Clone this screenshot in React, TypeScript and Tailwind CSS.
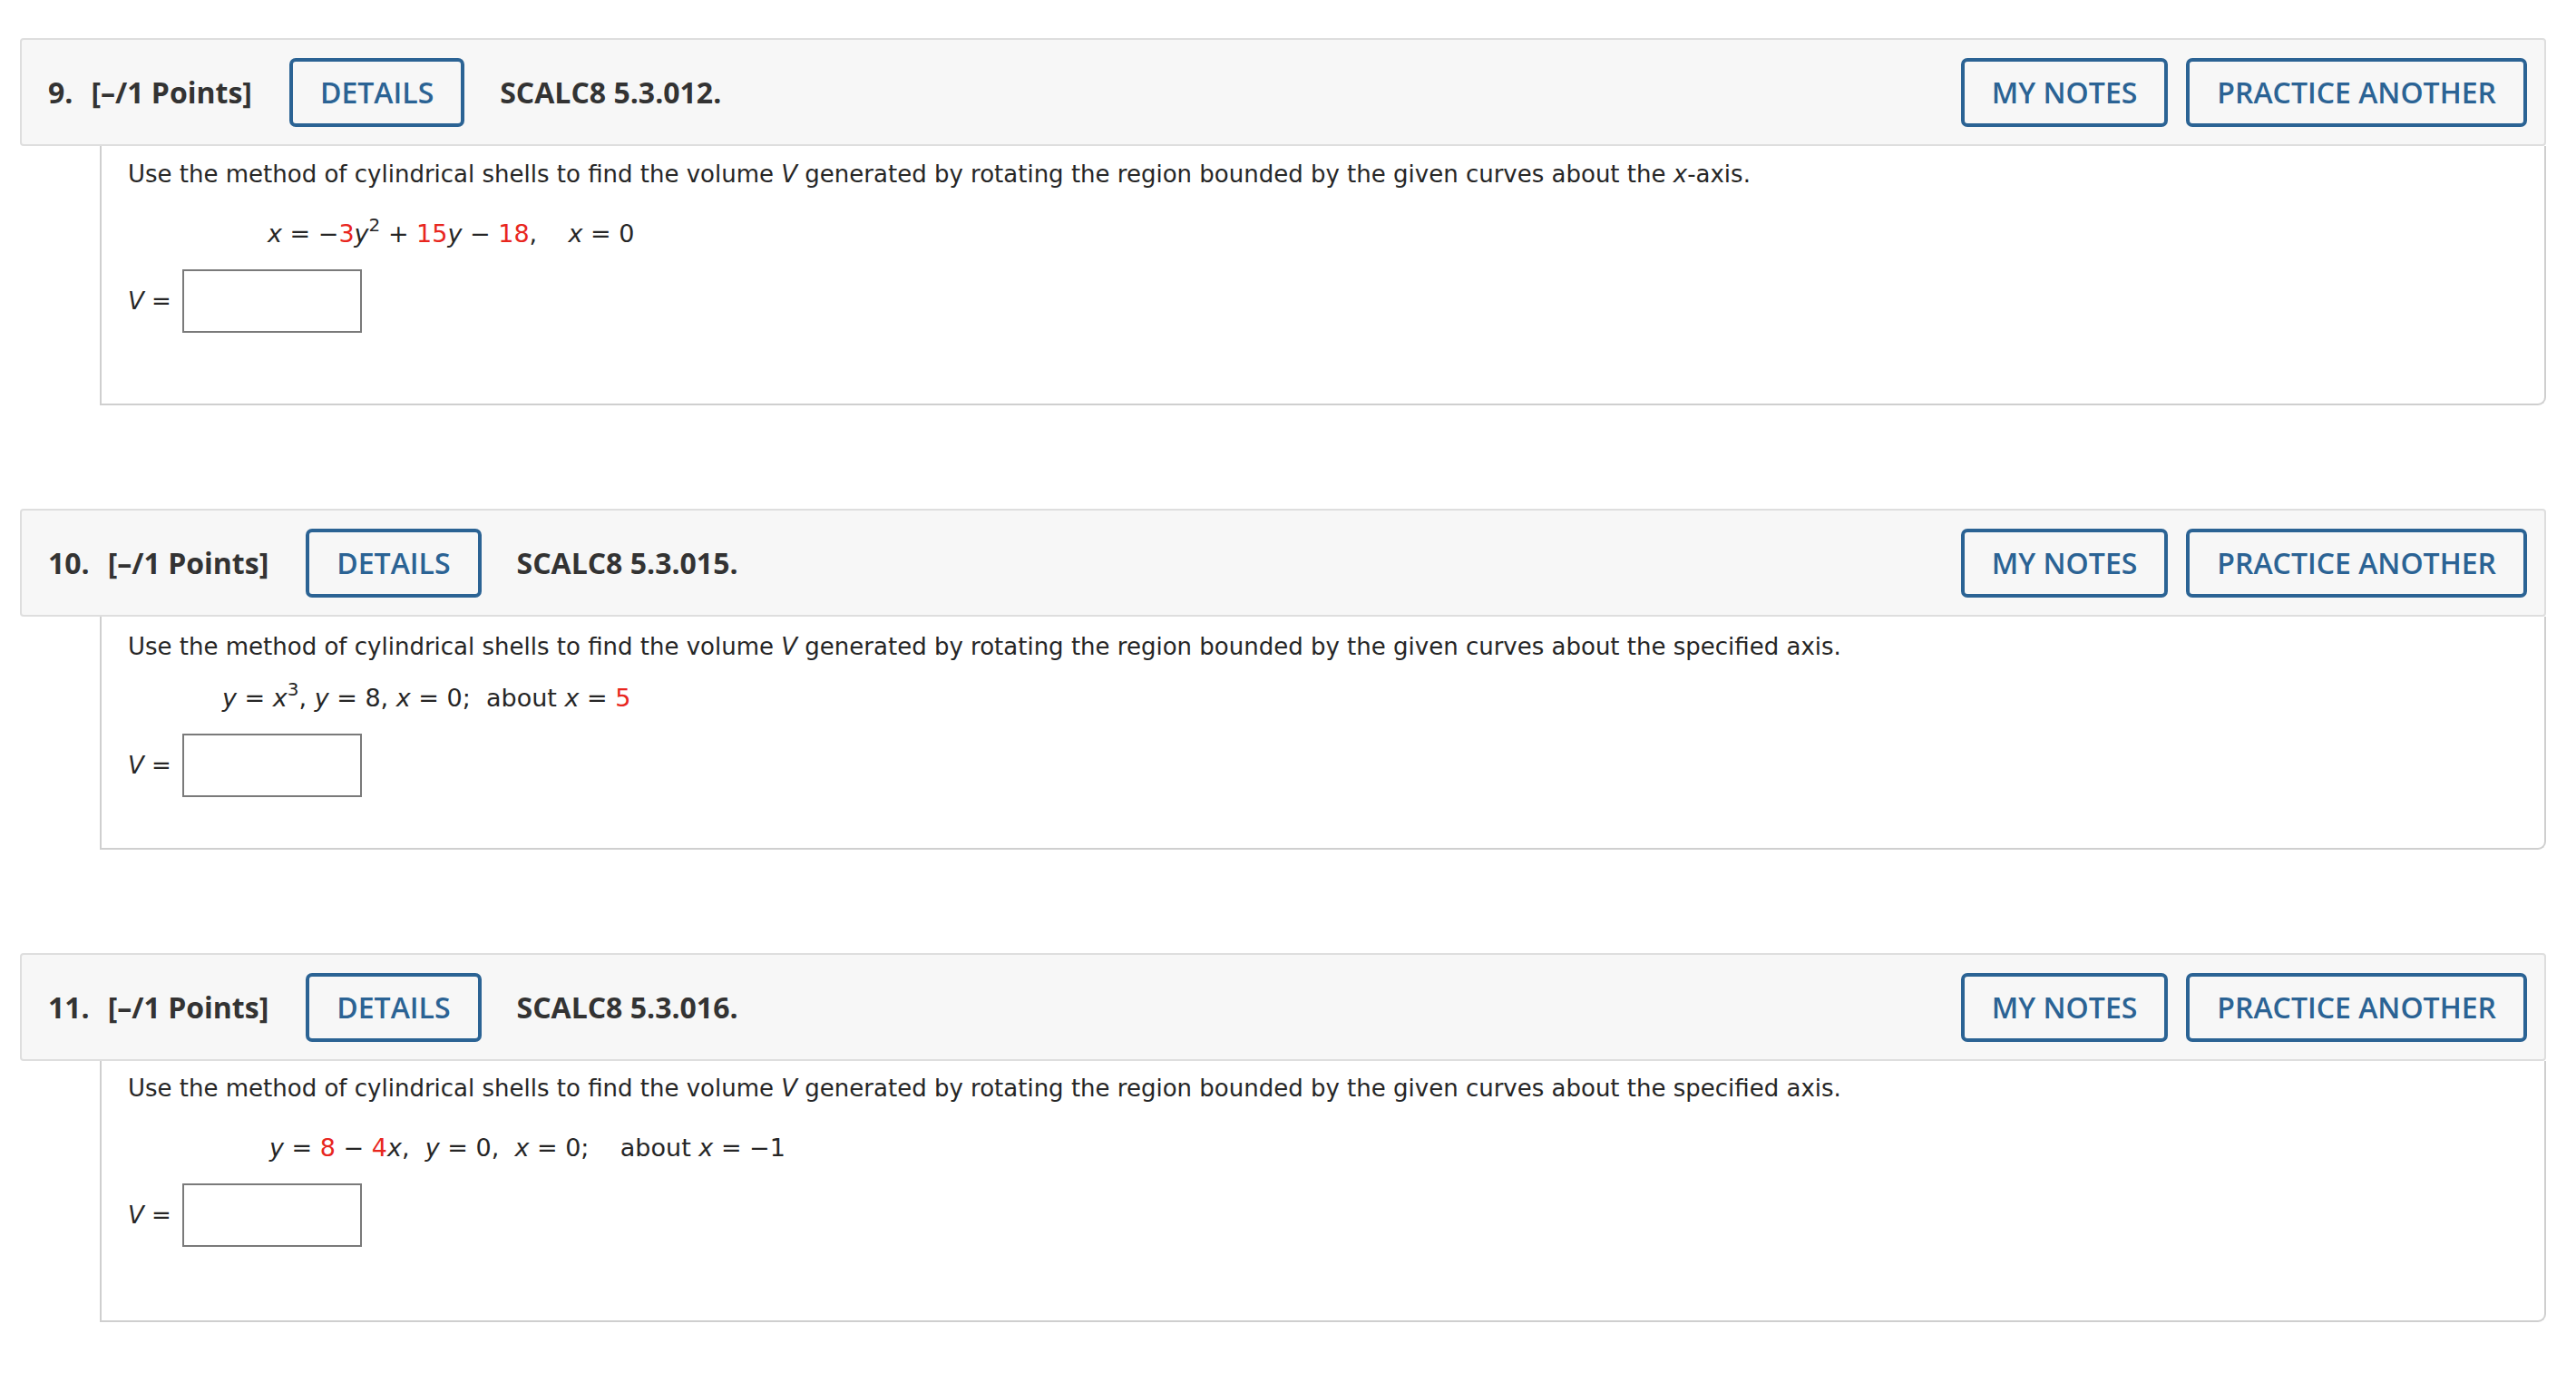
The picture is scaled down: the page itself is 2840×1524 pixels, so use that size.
import type { ReactNode } from 'react';

const R = ({ children }: { children: ReactNode }) => <span className="text-[#e8261e]">{children}</span>;
const I = ({ children }: { children: ReactNode }) => <i>{children}</i>;
const Sup = ({ children }: { children: ReactNode }) => (
  <span className="relative -top-[12px] text-[20px] leading-none">{children}</span>
);

type Q = {
  num: string;
  code: string;
  prompt: ReactNode;
  equation: ReactNode;
  indent: string;
  pad: { top: string; eq: string; bottom: string };
};

const questions: Q[] = [
  {
    num: '9.',
    code: 'SCALC8 5.3.012.',
    prompt: (
      <>
        Use the method of cylindrical shells to find the volume <I>V</I> generated by rotating the region bounded by the given curves about the <I>x</I>-axis.
      </>
    ),
    equation: (
      <>
        <I>x</I> = −<R>3</R><I>y</I><Sup>2</Sup> + <R>15</R><I>y</I> − <R>18</R>,{'    '}<I>x</I> = 0
      </>
    ),
    indent: 'pl-[154px]',
    pad: { top: 'pt-[12px]', eq: 'mt-[26px]', bottom: 'pb-[78px]' },
  },
  {
    num: '10.',
    code: 'SCALC8 5.3.015.',
    prompt: (
      <>
        Use the method of cylindrical shells to find the volume <I>V</I> generated by rotating the region bounded by the given curves about the specified axis.
      </>
    ),
    equation: (
      <>
        <I>y</I> = <I>x</I><Sup>3</Sup>, <I>y</I> = 8, <I>x</I> = 0;{'  '}about <I>x</I> = <R>5</R>
      </>
    ),
    indent: 'pl-[104px]',
    pad: { top: 'pt-[14px]', eq: 'mt-[17px]', bottom: 'pb-[56px]' },
  },
  {
    num: '11.',
    code: 'SCALC8 5.3.016.',
    prompt: (
      <>
        Use the method of cylindrical shells to find the volume <I>V</I> generated by rotating the region bounded by the given curves about the specified axis.
      </>
    ),
    equation: (
      <>
        <I>y</I> = <R>8</R> − <R>4</R><I>x</I>,{'  '}<I>y</I> = 0,{'  '}<I>x</I> = 0;{'    '}about <I>x</I> = −1
      </>
    ),
    indent: 'pl-[156px]',
    pad: { top: 'pt-[11px]', eq: 'mt-[26px]', bottom: 'pb-[81px]' },
  },
];

function OutlineButton({ label }: { label: string }) {
  return (
    <button className="h-[76px] px-[30px] border-4 border-[#2b6394] rounded-[7px] text-[#2b6394] text-[32px] font-semibold leading-none bg-transparent">
      {label}
    </button>
  );
}

function Question({ q }: { q: Q }) {
  return (
    <div>
      <div className="flex items-center h-[119px] pl-[29px] pr-[19px] bg-[#f7f7f7] border-2 border-[#dedede] rounded-[4px] font-['Open_Sans',sans-serif] text-[#333]">
        <span className="text-[32px] font-bold">{q.num}</span>
        <span className="ml-[20px] text-[32px] font-bold">[–/1 Points]</span>
        <div className="ml-[41px]">
          <OutlineButton label="DETAILS" />
        </div>
        <span className="ml-[39px] text-[32px] font-bold">{q.code}</span>
        <div className="ml-auto flex gap-[20px]">
          <OutlineButton label="MY NOTES" />
          <OutlineButton label="PRACTICE ANOTHER" />
        </div>
      </div>
      <div
        className={`ml-[88px] border-2 border-t-0 border-[#cfcfcf] rounded-br-[9px] pl-[29px] ${q.pad.top} ${q.pad.bottom} font-['DejaVu_Sans',Verdana,sans-serif] text-[26px] leading-[39px] text-[#262626]`}
      >
        <p>{q.prompt}</p>
        <div className={`${q.pad.eq} ${q.indent} whitespace-pre text-[27px]`}>{q.equation}</div>
        <div className="mt-[20px] flex items-center gap-[12px]">
          <span>
            <I>V</I> =
          </span>
          <input type="text" className="w-[198px] h-[70px] border-2 border-[#7a7a7a] bg-white outline-none" />
        </div>
      </div>
    </div>
  );
}

export default function App() {
  return (
    <div className="min-h-screen bg-white pt-[42px] pl-[22px] pr-[33px] flex flex-col gap-[114px]">
      {questions.map(q => (
        <Question key={q.num} q={q} />
      ))}
    </div>
  );
}
